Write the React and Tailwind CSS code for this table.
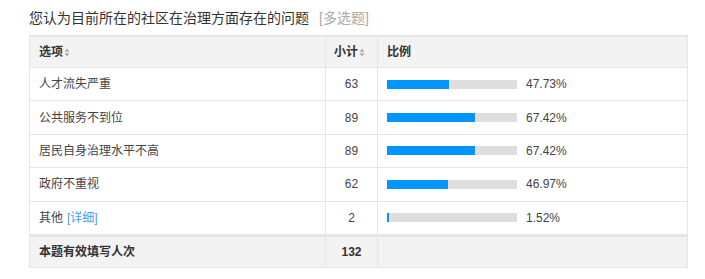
import React from "react";

const rows = [
  { label: "人才流失严重", count: 63, pct: 47.73 },
  { label: "公共服务不到位", count: 89, pct: 67.42 },
  { label: "居民自身治理水平不高", count: 89, pct: 67.42 },
  { label: "政府不重视", count: 62, pct: 46.97 },
  { label: "其他", count: 2, pct: 1.52, detail: true },
];

function SortIcon() {
  return (
    <svg width="6" height="9" viewBox="0 0 6 9" className="ml-[1px] inline-block">
      <path d="M3 0.5 L5.5 3.8 L0.5 3.8 Z" fill="#aaa" />
      <path d="M3 8.5 L5.5 5.2 L0.5 5.2 Z" fill="#aaa" />
    </svg>
  );
}

export default function App() {
  return (
    <div
      className="bg-white w-[705px] h-[279px] pl-[29px] pt-[8px] text-[#333]"
      style={{ fontFamily: '"Liberation Sans", "Noto Sans CJK SC", sans-serif' }}
    >
      <div className="text-[14px] leading-[20px] h-[20px]">
        您认为目前所在的社区在治理方面存在的问题
        <span className="ml-[10px] text-[#aaa]">[多选题]</span>
      </div>

      <div className="mt-[7px] w-[659px] border-l border-r border-[#e6e6e6] text-[12px]">
        <div className="flex h-[33px] bg-[#f3f3f3] border-t-2 border-b border-[#e6e6e6] font-bold text-[#333]">
          <div className="w-[296px] pl-[9px] flex items-center border-r border-[#e6e6e6]">
            选项
            <SortIcon />
          </div>
          <div className="w-[52px] pl-[8px] flex items-center border-r border-[#e6e6e6]">
            小计
            <SortIcon />
          </div>
          <div className="flex-1 pl-[9px] flex items-center">比例</div>
        </div>

        {rows.map((r) => (
          <div key={r.label} className="flex h-[33.4px] border-b border-[#e6e6e6] text-[#444]">
            <div className="w-[296px] pl-[9px] flex items-center border-r border-[#e6e6e6]">
              {r.label}
              {r.detail && <span className="ml-[4px] text-[#4a9bf0]">[详细]</span>}
            </div>
            <div className="w-[52px] flex items-center justify-center border-r border-[#e6e6e6]">
              {r.count}
            </div>
            <div className="flex-1 pl-[9px] flex items-center">
              <div className="w-[130px] h-[9px] bg-[#dedede]">
                <div className="h-full bg-[#0095ff]" style={{ width: `${Math.max(r.pct, 1.5)}%` }} />
              </div>
              <span className="ml-[9px]">{r.pct.toFixed(2)}%</span>
            </div>
          </div>
        ))}

        <div className="flex h-[33px] bg-[#f3f3f3] border-t-2 border-b border-[#e6e6e6] font-bold text-[#333]">
          <div className="w-[296px] pl-[9px] flex items-center border-r border-[#e6e6e6]">
            本题有效填写人次
          </div>
          <div className="w-[52px] flex items-center justify-center border-r border-[#e6e6e6]">132</div>
          <div className="flex-1" />
        </div>
      </div>
    </div>
  );
}
